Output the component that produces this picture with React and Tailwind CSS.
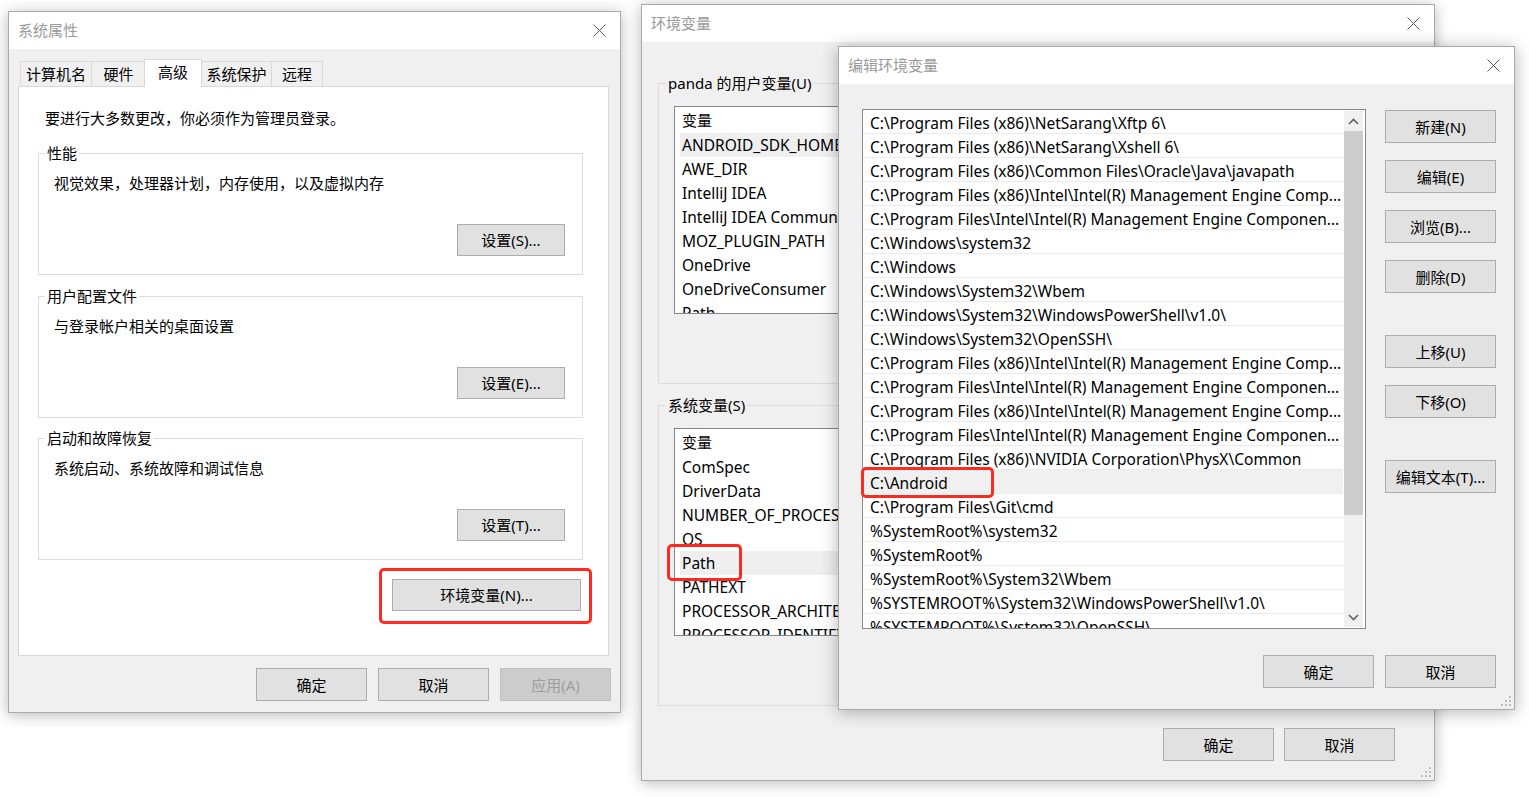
import React from "react";

function CloseX() {
  return (
    <svg width="13" height="13" viewBox="0 0 13 13" className="block">
      <path d="M0.5 0.5L12.5 12.5M12.5 0.5L0.5 12.5" stroke="#5a5a5a" strokeWidth="1" />
    </svg>
  );
}

function TitleBar({ title }) {
  return (
    <div className="flex h-[37px] shrink-0 items-center justify-between bg-white pl-[9px] pr-[14px]">
      <span className="-mt-[1px] text-[15px] leading-[20px] text-[#9a9a9a]">{title}</span>
      <CloseX />
    </div>
  );
}

function Btn({ children, w = "w-[111px]", h = "h-[33px]", disabled }) {
  return (
    <div
      className={`${w} ${h} flex shrink-0 items-center justify-center border text-[15px] leading-[20px] ${
        disabled ? "border-[#bfbfbf] bg-[#cccccc] text-[#9d9d9d]" : "border-[#adadad] bg-[#e1e1e1] text-black"
      }`}
    >
      {children}
    </div>
  );
}

function Grip() {
  return (
    <svg width="12" height="12" viewBox="0 0 12 12" fill="#bdbdbd" className="block">
      <rect x="9" y="1" width="2" height="2" />
      <rect x="5" y="5" width="2" height="2" />
      <rect x="9" y="5" width="2" height="2" />
      <rect x="1" y="9" width="2" height="2" />
      <rect x="5" y="9" width="2" height="2" />
      <rect x="9" y="9" width="2" height="2" />
    </svg>
  );
}

function Tab({ children, w, ml = "" }) {
  return (
    <div
      className={`${w} ${ml} mb-[1px] flex h-[25px] shrink-0 items-center justify-center border border-b-0 border-[#d9d9d9] bg-[#f0f0f0] text-[15px] leading-[20px]`}
    >
      {children}
    </div>
  );
}

function SettingGroup({ label, text, btn, mt }) {
  return (
    <fieldset className={`${mt} ml-[19px] w-[545px] border border-[#dcdcdc]`}>
      <legend className="ml-[6px] px-[2px] text-[15px] leading-[20px]">{label}</legend>
      <div className="pb-[18px] pl-[15px] pr-[17px] pt-[10px]">
        <div className="text-[15px] leading-[20px]">{text}</div>
        <div className="mt-[31px] flex justify-end">
          <Btn w="w-[108px]" h="h-[32px]">
            {btn}
          </Btn>
        </div>
      </div>
    </fieldset>
  );
}

function SystemProperties() {
  return (
    <div className="absolute left-[8px] top-[11px] flex h-[702px] w-[613px] flex-col border border-[#aaaaaa] bg-[#f0f0f0] shadow-[0_2px_14px_rgba(0,0,0,0.28)]">
      <TitleBar title="系统属性" />
      <div className="flex flex-1 flex-col pl-[9px] pr-[11px] pt-[10px]">
        <div className="flex h-[28px] items-end pl-[2px]">
          <Tab w="w-[72px]">计算机名</Tab>
          <Tab w="w-[55px]" ml="-ml-[1px]">
            硬件
          </Tab>
          <div className="relative z-10 -ml-[2px] flex h-[28px] w-[58px] shrink-0 justify-center border border-b-0 border-[#d9d9d9] bg-white pt-[2px] text-[15px] leading-[20px]">
            高级
          </div>
          <Tab w="w-[71px]" ml="-ml-[1px]">
            系统保护
          </Tab>
          <Tab w="w-[52px]" ml="-ml-[1px]">
            远程
          </Tab>
        </div>
        <div className="-mt-[1px] h-[570px] w-[591px] border border-[#d9d9d9] bg-white pt-[21px]">
          <div className="pl-[26px] text-[15px] leading-[20px]">要进行大多数更改，你必须作为管理员登录。</div>
          <SettingGroup mt="mt-[15px]" label="性能" text="视觉效果，处理器计划，内存使用，以及虚拟内存" btn="设置(S)..." />
          <SettingGroup mt="mt-[11px]" label="用户配置文件" text="与登录帐户相关的桌面设置" btn="设置(E)..." />
          <SettingGroup mt="mt-[10px]" label="启动和故障恢复" text="系统启动、系统故障和调试信息" btn="设置(T)..." />
          <div className="mt-[19px] flex justify-end pr-[27px]">
            <Btn w="w-[189px]" h="h-[32px]">
              环境变量(N)...
            </Btn>
          </div>
        </div>
        <div className="-mr-[2px] mt-[12px] flex justify-end gap-[11px]">
          <Btn>确定</Btn>
          <Btn>取消</Btn>
          <Btn disabled>应用(A)</Btn>
        </div>
      </div>
    </div>
  );
}

function VarList({ rows, selected }) {
  return (
    <div className="h-[208px] overflow-hidden border border-[#828790] bg-white">
      <div className="flex h-[26px] items-center pl-[7px] text-[15px] leading-[20px]">变量</div>
      {rows.map((r) => (
        <div
          key={r}
          className={`ml-[5px] flex h-[24px] items-center whitespace-nowrap pl-[2px] text-[15.5px] leading-[20px] ${
            r === selected ? "bg-[#efefef]" : ""
          }`}
        >
          {r}
        </div>
      ))}
    </div>
  );
}

function VarGroup({ label, rows, selected, mt }) {
  return (
    <fieldset className={`${mt} mx-[16px] border border-[#dcdcdc]`}>
      <legend className="ml-[7px] px-[2px] text-[15px] leading-[20px]">{label}</legend>
      <div className="px-[15px] pb-[69px] pt-[13px]">
        <VarList rows={rows} selected={selected} />
      </div>
    </fieldset>
  );
}

function EnvVars() {
  return (
    <div className="absolute left-[641px] top-[4px] flex h-[777px] w-[794px] flex-col border border-[#aaaaaa] bg-[#f0f0f0] shadow-[0_2px_14px_rgba(0,0,0,0.28)]">
      <TitleBar title="环境变量" />
      <div className="relative flex flex-1 flex-col pt-[31px]">
        <VarGroup
          label="panda 的用户变量(U)"
          selected="ANDROID_SDK_HOME"
          rows={[
            "ANDROID_SDK_HOME",
            "AWE_DIR",
            "IntelliJ IDEA",
            "IntelliJ IDEA Community Edition",
            "MOZ_PLUGIN_PATH",
            "OneDrive",
            "OneDriveConsumer",
            "Path",
          ]}
        />
        <VarGroup
          mt="mt-[11px]"
          label="系统变量(S)"
          selected="Path"
          rows={[
            "ComSpec",
            "DriverData",
            "NUMBER_OF_PROCESSORS",
            "OS",
            "Path",
            "PATHEXT",
            "PROCESSOR_ARCHITECTURE",
            "PROCESSOR_IDENTIFIER",
          ]}
        />
        <div className="mt-[22px] flex justify-end gap-[10px] pr-[39px]">
          <Btn>确定</Btn>
          <Btn>取消</Btn>
        </div>
        <div className="absolute bottom-[2px] right-[2px]">
          <Grip />
        </div>
      </div>
    </div>
  );
}

const PATHS = [
  "C:\\Program Files (x86)\\NetSarang\\Xftp 6\\",
  "C:\\Program Files (x86)\\NetSarang\\Xshell 6\\",
  "C:\\Program Files (x86)\\Common Files\\Oracle\\Java\\javapath",
  "C:\\Program Files (x86)\\Intel\\Intel(R) Management Engine Comp...",
  "C:\\Program Files\\Intel\\Intel(R) Management Engine Componen...",
  "C:\\Windows\\system32",
  "C:\\Windows",
  "C:\\Windows\\System32\\Wbem",
  "C:\\Windows\\System32\\WindowsPowerShell\\v1.0\\",
  "C:\\Windows\\System32\\OpenSSH\\",
  "C:\\Program Files (x86)\\Intel\\Intel(R) Management Engine Comp...",
  "C:\\Program Files\\Intel\\Intel(R) Management Engine Componen...",
  "C:\\Program Files (x86)\\Intel\\Intel(R) Management Engine Comp...",
  "C:\\Program Files\\Intel\\Intel(R) Management Engine Componen...",
  "C:\\Program Files (x86)\\NVIDIA Corporation\\PhysX\\Common",
  "C:\\Android",
  "C:\\Program Files\\Git\\cmd",
  "%SystemRoot%\\system32",
  "%SystemRoot%",
  "%SystemRoot%\\System32\\Wbem",
  "%SYSTEMROOT%\\System32\\WindowsPowerShell\\v1.0\\",
  "%SYSTEMROOT%\\System32\\OpenSSH\\",
];

function Chevron({ down }) {
  return (
    <svg width="11" height="7" viewBox="0 0 11 7" className="block">
      <polyline
        points={down ? "1,1 5.5,5.5 10,1" : "1,6 5.5,1.5 10,6"}
        fill="none"
        stroke="#606060"
        strokeWidth="1.6"
      />
    </svg>
  );
}

function EditEnv() {
  return (
    <div className="absolute left-[838px] top-[46px] flex h-[664px] w-[677px] flex-col border border-[#aaaaaa] bg-[#f0f0f0] shadow-[0_2px_16px_rgba(0,0,0,0.3)]">
      <TitleBar title="编辑环境变量" />
      <div className="relative flex flex-1 flex-col pl-[23px] pr-[18px] pt-[25px]">
        <div className="flex">
          <div className="flex h-[520px] w-[504px] border border-[#828790] bg-white">
            <div className="mr-[1px] flex-1 overflow-hidden">
              {PATHS.map((p, i) => (
                <div
                  key={i}
                  className={`h-[24px] overflow-hidden whitespace-nowrap border-b border-[#ececec] pl-[7px] pt-[3px] text-[15.5px] leading-[20px] ${
                    i === 15 ? "bg-[#f0f0f0]" : ""
                  }`}
                >
                  {p}
                </div>
              ))}
            </div>
            <div className="my-[1px] mr-[2px] flex w-[19px] flex-col bg-[#f0f0f0]">
              <div className="flex h-[20px] items-center justify-center">
                <Chevron />
              </div>
              <div className="h-[384px] bg-[#cdcdcd]" />
              <div className="flex-1" />
              <div className="flex h-[20px] items-center justify-center">
                <Chevron down />
              </div>
            </div>
          </div>
          <div className="ml-[19px] mt-[1px] flex flex-col">
            <Btn>新建(N)</Btn>
            <div className="mt-[17px]">
              <Btn>编辑(E)</Btn>
            </div>
            <div className="mt-[17px]">
              <Btn>浏览(B)...</Btn>
            </div>
            <div className="mt-[17px]">
              <Btn>删除(D)</Btn>
            </div>
            <div className="mt-[42px]">
              <Btn>上移(U)</Btn>
            </div>
            <div className="mt-[17px]">
              <Btn>下移(O)</Btn>
            </div>
            <div className="mt-[42px]">
              <Btn>编辑文本(T)...</Btn>
            </div>
          </div>
        </div>
        <div className="mt-[26px] flex justify-end gap-[11px]">
          <Btn>确定</Btn>
          <Btn>取消</Btn>
        </div>
        <div className="absolute bottom-[2px] right-[2px]">
          <Grip />
        </div>
      </div>
    </div>
  );
}

export default function App() {
  return (
    <div className="relative h-[797px] w-[1529px] overflow-hidden bg-white font-['Noto_Sans','Noto_Sans_CJK_SC',sans-serif] text-black">
      <SystemProperties />
      <EnvVars />
      <EditEnv />
      <div className="absolute left-[379px] top-[568px] z-50 h-[56px] w-[213px] rounded-[5px] border-[3px] border-[#fe2a1f]" />
      <div className="absolute left-[667px] top-[544px] z-50 h-[37px] w-[75px] rounded-[5px] border-[3px] border-[#fe2a1f]" />
      <div className="absolute left-[861px] top-[467px] z-50 h-[31px] w-[133px] rounded-[5px] border-[3px] border-[#fe2a1f]" />
    </div>
  );
}
